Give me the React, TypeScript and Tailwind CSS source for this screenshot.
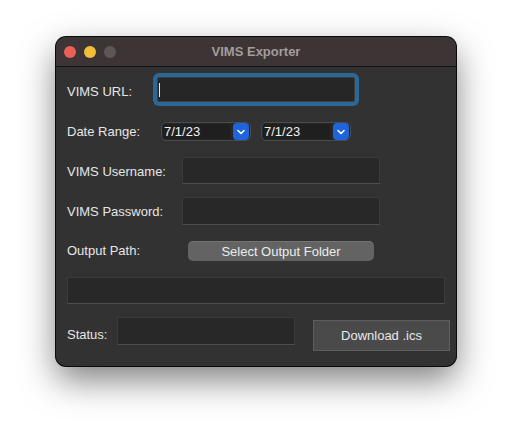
import React from 'react';

const font = { fontFamily: '"Liberation Sans", Arial, sans-serif' };

const Field = ({ className }: { className: string }) => (
  <div className={`bg-[#282828] border border-[#3a3a3a] border-b-[#4e4e4e] ${className}`} />
);

const DatePicker = () => (
  <div className="flex items-center w-[90px] h-[19px] rounded-[5px] border border-[#4a4a4a] bg-[#262626] pl-[1px] pr-[1px]">
    <div className="flex-1 h-[15px] bg-[#1f1f1f] rounded-l-[3px] flex items-center pl-[1px] text-[13px] leading-none text-[#f2f2f2]">
      7/1/23
    </div>
    <div className="ml-[3px] w-[16px] h-[17px] rounded-[4px] bg-[#2064dc] flex items-center justify-center">
      <svg width="8" height="6" viewBox="0 0 8 6" fill="none">
        <path d="M1 1.5 L4 4.5 L7 1.5" stroke="white" strokeWidth="1.6" strokeLinecap="round" strokeLinejoin="round" />
      </svg>
    </div>
  </div>
);

const App: React.FC = () => {
  return (
    <div className="w-[512px] h-[440px] bg-white pt-[37px] pl-[56px]" style={font}>
      <div className="w-[400px] h-[329px] rounded-[10px] overflow-hidden bg-[#323232] shadow-[0_0_0_1px_#0a0a0a,0_14px_34px_rgba(0,0,0,0.5)] flex flex-col">
        {/* title bar */}
        <div className="relative h-[30px] bg-[#3d3535] border-b border-[#141414] flex items-center shrink-0">
          <div className="flex gap-[8px] pl-[8px]">
            <span className="w-[12px] h-[12px] rounded-full bg-[#ec5f57]" />
            <span className="w-[12px] h-[12px] rounded-full bg-[#f1bf3a]" />
            <span className="w-[12px] h-[12px] rounded-full bg-[#5c5656]" />
          </div>
          <div className="absolute inset-0 flex items-center justify-center text-[13px] font-bold text-[#a39c9c]">
            VIMS Exporter
          </div>
        </div>

        <div className="flex flex-col pl-[11px] text-[13px] text-[#e6e6e6]">
          {/* URL */}
          <div className="flex items-center h-[33px] mt-[6px]">
            <span className="w-[86px] mt-[4px]">VIMS URL:</span>
            <div className="w-[206px] h-[33px] rounded-[6px] bg-[#2a6898] p-[4px]">
              <div className="h-full bg-[#262626] border border-[#3e3e3e] rounded-[2px] flex items-center pl-[1px]">
                <span className="w-[1px] h-[14px] bg-[#e8e8e8]" />
              </div>
            </div>
          </div>

          {/* Date range */}
          <div className="flex items-center h-[19px] mt-[16px]">
            <span className="w-[94px]">Date Range:</span>
            <DatePicker />
            <div className="w-[10px]" />
            <DatePicker />
          </div>

          {/* Username */}
          <div className="flex items-center h-[27px] mt-[16px]">
            <span className="w-[115px] mt-[2px]">VIMS Username:</span>
            <Field className="w-[198px] h-[27px]" />
          </div>

          {/* Password */}
          <div className="flex items-center h-[28px] mt-[13px]">
            <span className="w-[115px] mt-[2px]">VIMS Password:</span>
            <Field className="w-[198px] h-[28px]" />
          </div>

          {/* Output path */}
          <div className="flex items-center h-[20px] mt-[16px]">
            <span className="w-[121px]">Output Path:</span>
            <div className="w-[186px] h-[20px] rounded-[5px] bg-[#636363] border-t border-[#747474] flex items-center justify-center text-[#ececec]">
              Select Output Folder
            </div>
          </div>

          <Field className="w-[378px] h-[27px] mt-[16px]" />

          {/* Status */}
          <div className="flex items-start h-[34px] mt-[13px]">
            <span className="w-[50px] mt-[8px]">Status:</span>
            <Field className="w-[178px] h-[28px]" />
            <div className="ml-[18px] mt-[3px] w-[137px] h-[31px] bg-[#4a4a4a] border border-[#5e5e5e] flex items-center justify-center text-[#e8e8e8]">
              Download .ics
            </div>
          </div>
        </div>
      </div>
    </div>
  );
};

export default App;
